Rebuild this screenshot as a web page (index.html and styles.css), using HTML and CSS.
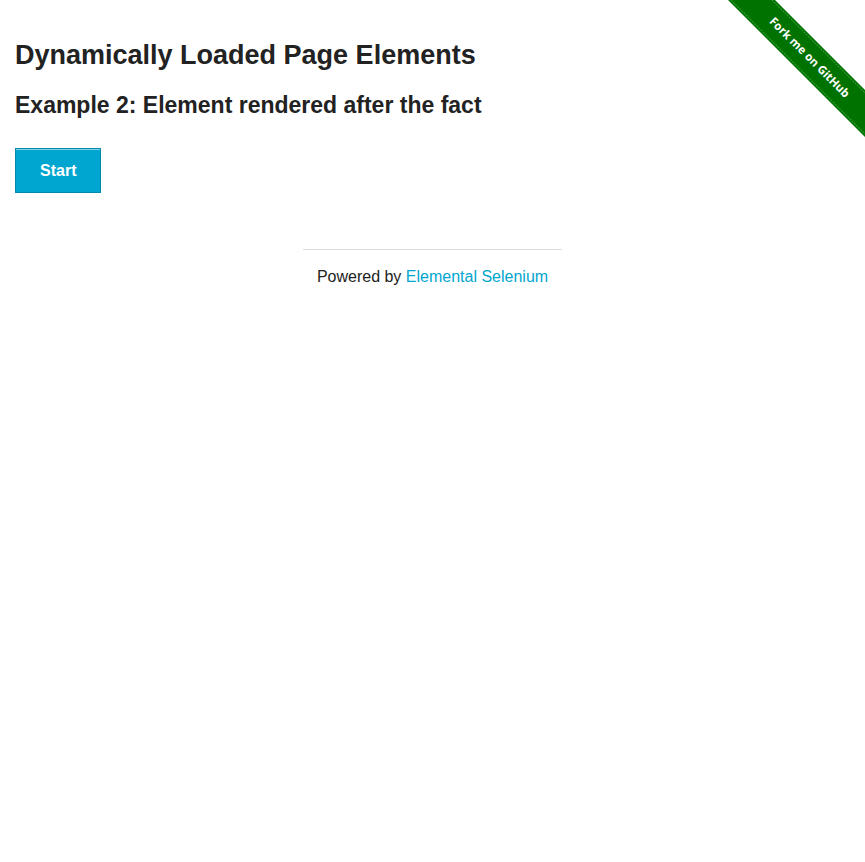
FILE: index.html
```html
<!DOCTYPE html>
<html>
<head>
<meta charset="utf-8">
<link rel="stylesheet" href="styles.css">
</head>
<body>
<a class="ribbon" href="#">
  <svg width="149" height="149" viewBox="0 0 149 149">
    <polygon points="12,0 59,0 149,90 149,137" fill="#007200"/>
    <line x1="15" y1="0" x2="149" y2="134" stroke="#2f9a2f" stroke-width="1.2" stroke-dasharray="2 1"/>
    <line x1="56" y1="0" x2="149" y2="93" stroke="#2f9a2f" stroke-width="1.2" stroke-dasharray="2 1"/>
    <text x="0" y="0" transform="translate(93 58) rotate(45)" text-anchor="middle" class="ribbon-text">Fork me on GitHub</text>
  </svg>
</a>
<div class="page">
  <div class="example">
    <h3 class="title">Dynamically Loaded Page Elements</h3>
    <h4 class="subtitle">Example 2: Element rendered after the fact</h4>
    <div class="start"><button class="button">Start</button></div>
  </div>
</div>
<div class="footer">
  <hr class="rule">
  <div class="powered">Powered by <a class="link" href="#">Elemental Selenium</a></div>
</div>
</body>
</html>
```
FILE: styles.css
```css
html, body {
  margin: 0;
  padding: 0;
  background: #fff;
  font-family: "Liberation Sans", Arial, sans-serif;
  color: #222;
}
.ribbon {
  position: absolute;
  top: 0;
  right: 0;
  display: block;
  width: 149px;
  height: 149px;
}
.ribbon svg { display: block; }
.ribbon-text {
  fill: #fff;
  font-family: "Open Sans", "DejaVu Sans", sans-serif;
  font-weight: 700;
  font-size: 11.5px;
  dominant-baseline: middle;
}
.page {
  padding: 0 15px;
}
.example {
  padding-top: 39px;
}
.title {
  font-size: 27px;
  font-weight: 700;
  line-height: 32px;
  margin: 0 0 21px 0;
  color: #222;
}
.subtitle {
  font-size: 23px;
  font-weight: 700;
  line-height: 27px;
  margin: 0 0 29px 0;
  color: #222;
}
.button {
  display: block;
  background: #00a6cf;
  border: 1px solid #0089ab;
  box-shadow: inset 0 1px 0 rgba(255,255,255,0.5);
  color: #fff;
  font-family: "Liberation Sans", Arial, sans-serif;
  font-weight: 700;
  font-size: 16px;
  line-height: 20px;
  padding: 12px 24px 11px;
  margin: 0;
  cursor: pointer;
}
.footer {
  width: calc(100% / 3 - 30px);
  margin: 56px auto 0;
  text-align: center;
}
.rule {
  border: 0;
  border-top: 1px solid #ddd;
  margin: 0 0 17px 0;
  height: 0;
}
.powered {
  font-size: 16px;
  line-height: 20px;
  white-space: nowrap;
}
.link {
  color: #00a6cf;
  text-decoration: none;
}
```
